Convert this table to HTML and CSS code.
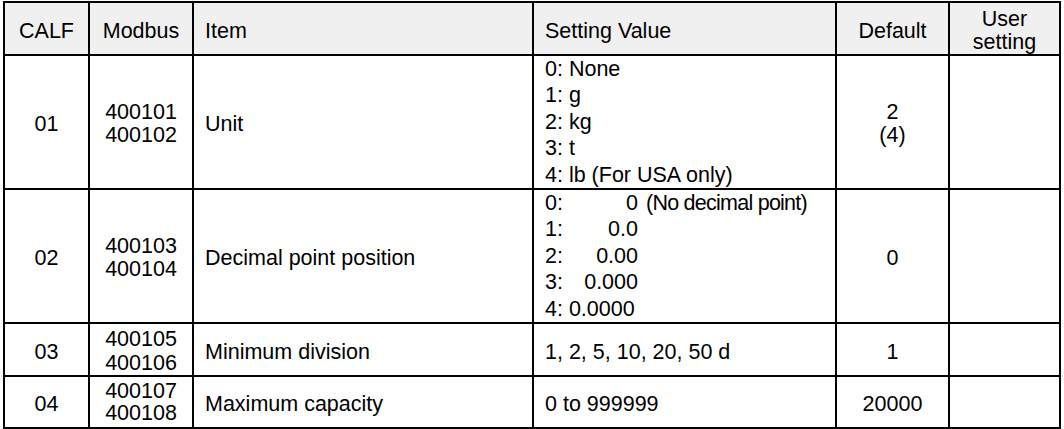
FILE: index.html
```html
<!DOCTYPE html>
<html lang="en">
<head>
<meta charset="utf-8">
<title>CALF settings</title>
<link rel="stylesheet" href="styles.css">
</head>
<body>
<table class="grid">
  <colgroup>
    <col class="c-calf">
    <col class="c-modbus">
    <col class="c-item">
    <col class="c-value">
    <col class="c-default">
    <col class="c-user">
  </colgroup>
  <thead>
    <tr class="r-head">
      <th class="mid">CALF</th>
      <th class="mid">Modbus</th>
      <th class="mid left">Item</th>
      <th class="mid left">Setting Value</th>
      <th class="mid">Default</th>
      <th class="user">User<br>setting</th>
    </tr>
  </thead>
  <tbody>
    <tr class="r-tall">
      <td class="mid">01</td>
      <td class="mid modbus">400101<br>400102</td>
      <td class="mid left">Unit</td>
      <td class="list">
        <div>0: None</div>
        <div>1: g</div>
        <div>2: kg</div>
        <div>3: t</div>
        <div>4: lb (For USA only)</div>
      </td>
      <td class="mid modbus">2<br>(4)</td>
      <td></td>
    </tr>
    <tr class="r-tall">
      <td class="mid">02</td>
      <td class="mid modbus">400103<br>400104</td>
      <td class="mid left">Decimal point position</td>
      <td class="list">
        <div><span class="k">0:</span><span class="n">0</span><span class="note">(No decimal point)</span></div>
        <div><span class="k">1:</span><span class="n">0.0</span></div>
        <div><span class="k">2:</span><span class="n">0.00</span></div>
        <div><span class="k">3:</span><span class="n">0.000</span></div>
        <div>4: 0.0000</div>
      </td>
      <td class="mid">0</td>
      <td></td>
    </tr>
    <tr class="r-short">
      <td class="mid">03</td>
      <td class="mid modbus">400105<br>400106</td>
      <td class="mid left">Minimum division</td>
      <td class="mid left">1, 2, 5, 10, 20, 50 d</td>
      <td class="mid">1</td>
      <td></td>
    </tr>
    <tr class="r-short">
      <td class="mid">04</td>
      <td class="mid modbus tight">400107<br>400108</td>
      <td class="mid left">Maximum capacity</td>
      <td class="mid left">0 to 999999</td>
      <td class="mid">20000</td>
      <td></td>
    </tr>
  </tbody>
</table>
</body>
</html>
```

FILE: styles.css
```css
html, body {
  margin: 0;
  background: #fff;
}

body {
  padding: 1px 0 0 3px;
  font-family: "Liberation Sans", Arial, sans-serif;
  font-size: 21.5px;
  color: #000;
}

.grid {
  table-layout: fixed;
  width: 1058px;
  border-collapse: separate;
  border-spacing: 2px;
  background: #000;
}

.c-calf { width: 83px; }
.c-modbus { width: 102px; }
.c-item { width: 338px; }
.c-value { width: 301px; }
.c-default { width: 111px; }
.c-user { width: 109px; }

.grid th,
.grid td {
  background: #fff;
  padding: 0;
  font-weight: normal;
  text-align: center;
  vertical-align: middle;
  line-height: 24px;
  white-space: nowrap;
}

.grid thead th {
  background: #f0f0f0;
}

.r-head { height: 51px; }
.r-tall { height: 132px; }
.r-short { height: 50px; }

.grid .mid {
  padding-top: 4px;
}

.grid .left {
  text-align: left;
  padding-left: 11px;
}

.grid .modbus {
  line-height: 23.5px;
}

.grid .tight {
  line-height: 22px;
  padding-top: 0;
}

.grid .user {
  vertical-align: top;
  padding-top: 5px;
  line-height: 23px;
}

.grid .list {
  text-align: left;
  vertical-align: top;
  padding-left: 11px;
  line-height: 26.4px;
}

.k {
  display: inline-block;
  width: 22px;
}

.n {
  display: inline-block;
  width: 71px;
  text-align: right;
}

.note {
  margin-left: 8px;
  letter-spacing: -0.75px;
}
```
